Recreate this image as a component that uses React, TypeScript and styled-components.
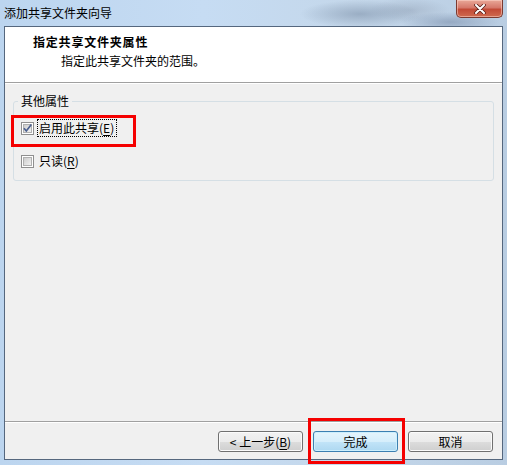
import React from 'react';
import styled, {createGlobalStyle} from "styled-components";

const GlobalStyle = createGlobalStyle`
  html, body {
    margin: 0;
    padding: 0;
    background: #ffffff;
  }

  body {
    font-family: "Noto Sans CJK SC", "Noto Sans", sans-serif;
    font-size: 12px;
    color: #000;
  }
`

const CSSWindow = styled.div`
  width: 507px;
  height: 465px;
  box-sizing: border-box;
  padding: 0 4px 5px;
  display: flex;
  flex-direction: column;
  background: radial-gradient(ellipse 60px 14px at 360px 14px, rgba(120, 140, 165, 0.55), transparent),
  radial-gradient(ellipse 50px 10px at 450px 22px, rgba(110, 130, 160, 0.5), transparent),
  radial-gradient(ellipse 40px 12px at 410px 10px, rgba(150, 165, 185, 0.5), transparent),
  linear-gradient(90deg, #bcd5ef 0%, #c6dcf3 40%, #c4d7ea 70%, #b9cde2 100%);
`

const CSSTitleBar = styled.div`
  height: 26px;
  flex: none;
  display: flex;
  justify-content: space-between;
  align-items: flex-start;

  .caption {
    padding-top: 5px;
    line-height: 16px;
    font-size: 12px;
  }
`

const CSSClose = styled.div`
  width: 47px;
  height: 18px;
  box-sizing: border-box;
  border: 1px solid #7b3a30;
  border-top: none;
  border-radius: 0 0 5px 5px;
  background: linear-gradient(#e9a898 0%, #d5786a 45%, #c24a36 55%, #cf6a4f 100%);
  box-shadow: inset 0 0 0 1px rgba(255, 220, 210, 0.5);
  display: flex;
  align-items: center;
  justify-content: center;
`

const CSSClient = styled.div`
  flex: 1;
  display: flex;
  flex-direction: column;
  border: 1px solid #55677e;
  background: #f0f0f0;
`

const CSSHeader = styled.div`
  height: 56px;
  flex: none;
  background: #ffffff;
  border-bottom: 1px solid #a0a0a0;
  box-shadow: 0 1px 0 #ffffff;
  box-sizing: border-box;
  padding: 7px 0 0 28px;
  line-height: 16px;

  .title {
    font-weight: 700;
    letter-spacing: 0.8px;
  }

  .subtitle {
    padding: 3px 0 0 28px;
  }
`

const CSSBody = styled.div`
  flex: 1;
  padding: 11px 8px 0;
`

const CSSGroup = styled.fieldset`
  margin: 0;
  border: 1px solid #d5dfe5;
  border-radius: 3px;
  padding: 11px 4px 10px;

  legend {
    padding: 0 3px;
    line-height: 14px;
  }
`

const CSSCheckRow = styled.div`
  display: inline-flex;
  align-items: center;
  height: 18px;
  margin-left: 3px;
  gap: 3px;
`

const CSSRows = styled.div`
  display: flex;
  flex-direction: column;
  align-items: flex-start;
  gap: 15px;
`

const CSSLabel = styled.span<{ $focused?: boolean }>`
  box-sizing: border-box;
  height: 18px;
  line-height: 16px;
  padding: 0 2px 0 1px;
  border: 1px dotted ${p => p.$focused ? '#000' : 'transparent'};

  u {
    text-decoration: underline;
    text-underline-offset: 2px;
  }
`

const CSSMark = styled.div<{ $top: number; $left: number; $right: number; $bottom: number }>`
  position: relative;
  display: inline-flex;

  &:after {
    content: '';
    position: absolute;
    top: ${p => p.$top}px;
    left: ${p => p.$left}px;
    right: ${p => p.$right}px;
    bottom: ${p => p.$bottom}px;
    border: 3px solid #f50000;
    pointer-events: none;
    z-index: 2;
  }
`

const CSSFooter = styled.div`
  height: 38px;
  flex: none;
  box-sizing: border-box;
  border-top: 1px solid #a0a0a0;
  box-shadow: inset 0 1px 0 #ffffff;
  padding: 9px 9px 0 0;
  display: flex;
  justify-content: flex-end;
  align-items: flex-start;
  gap: 10px;
`

const CSSButton = styled.div<{ $default?: boolean }>`
  width: 85px;
  height: 21px;
  box-sizing: border-box;
  border-radius: 3px;
  border: 1px solid ${p => p.$default ? '#3c7fb1' : '#707070'};
  background: ${p => p.$default
          ? 'linear-gradient(#e5f4fc 0%, #d6eefb 50%, #c2e4f8 51%, #aed8f1 100%)'
          : 'linear-gradient(#f2f2f2 0%, #ebebeb 50%, #dddddd 51%, #cfcfcf 100%)'};
  box-shadow: inset 0 0 0 1px ${p => p.$default ? '#cdeffd' : '#fbfbfb'};
  display: flex;
  align-items: center;
  justify-content: center;
  line-height: 16px;

  u {
    text-underline-offset: 2px;
  }
`

const CheckBox = ({checked}: { checked?: boolean }) => (
    <svg width="13" height="13" viewBox="0 0 13 13">
        <defs>
            <linearGradient id={checked ? 'cbOn' : 'cbOff'} x1="0" y1="0" x2="1" y2="1">
                <stop offset="0" stopColor="#cbcbcb"/>
                <stop offset="1" stopColor="#f4f4f4"/>
            </linearGradient>
        </defs>
        <rect x="0.5" y="0.5" width="12" height="12" fill="#fff" stroke="#8f8f8f"/>
        <rect x="2.5" y="2.5" width="8" height="8" fill={`url(#${checked ? 'cbOn' : 'cbOff'})`} stroke="#b0b0b0"/>
        {checked && <path d="M3 6.3 L5.3 9 L10.3 2.6" fill="none" stroke="#4a5f8f" strokeWidth="1.7"/>}
    </svg>
);

const App = () => {
    return (
        <>
            <GlobalStyle/>
            <CSSWindow>
                <CSSTitleBar>
                    <div className="caption">添加共享文件夹向导</div>
                    <CSSClose>
                        <svg width="12" height="10" viewBox="0 0 12 10">
                            <path d="M2 1 L10 9 M10 1 L2 9" stroke="#5a1f18" strokeWidth="3.6" strokeLinecap="round"/>
                            <path d="M2 1 L10 9 M10 1 L2 9" stroke="#ffffff" strokeWidth="2" strokeLinecap="round"/>
                        </svg>
                    </CSSClose>
                </CSSTitleBar>
                <CSSClient>
                    <CSSHeader>
                        <div className="title">指定共享文件夹属性</div>
                        <div className="subtitle">指定此共享文件夹的范围。</div>
                    </CSSHeader>
                    <CSSBody>
                        <CSSGroup>
                            <legend>其他属性</legend>
                            <CSSRows>
                                <CSSMark $top={-4} $left={-7} $right={-19} $bottom={-10}>
                                    <CSSCheckRow>
                                        <CheckBox checked/>
                                        <CSSLabel $focused>启用此共享(<u>E</u>)</CSSLabel>
                                    </CSSCheckRow>
                                </CSSMark>
                                <CSSCheckRow>
                                    <CheckBox/>
                                    <CSSLabel>只读(<u>R</u>)</CSSLabel>
                                </CSSCheckRow>
                            </CSSRows>
                        </CSSGroup>
                    </CSSBody>
                    <CSSFooter>
                        <CSSButton>&lt; 上一步(<u>B</u>)</CSSButton>
                        <CSSMark $top={-13} $left={-5} $right={-7} $bottom={-12}>
                            <CSSButton $default>完成</CSSButton>
                        </CSSMark>
                        <CSSButton>取消</CSSButton>
                    </CSSFooter>
                </CSSClient>
            </CSSWindow>
        </>
    );
};

export default App;
